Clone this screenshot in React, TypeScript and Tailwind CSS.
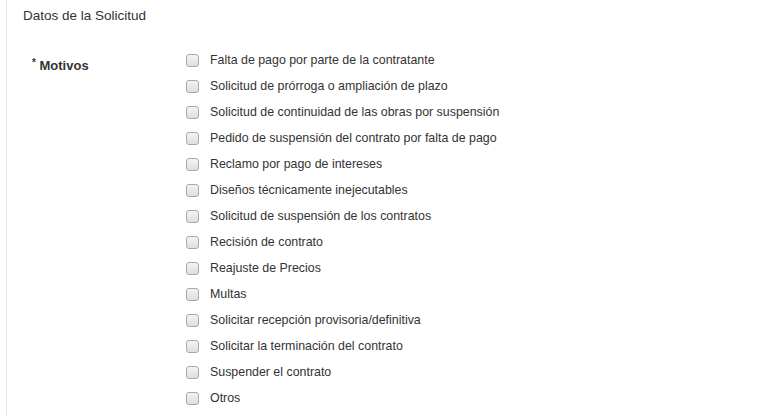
const motivos = [
  "Falta de pago por parte de la contratante",
  "Solicitud de prórroga o ampliación de plazo",
  "Solicitud de continuidad de las obras por suspensión",
  "Pedido de suspensión del contrato por falta de pago",
  "Reclamo por pago de intereses",
  "Diseños técnicamente inejecutables",
  "Solicitud de suspensión de los contratos",
  "Recisión de contrato",
  "Reajuste de Precios",
  "Multas",
  "Solicitar recepción provisoria/definitiva",
  "Solicitar la terminación del contrato",
  "Suspender el contrato",
  "Otros",
];

const Checkbox = () => (
  <span className="h-[13px] w-[13px] shrink-0 rounded-[3px] border border-[#a9a9a9] bg-gradient-to-b from-[#f4f4f4] to-[#dedede]" />
);

export default function App() {
  return (
    <div className="h-[416px] w-[766px] overflow-hidden bg-white font-['Liberation_Sans',Arial,sans-serif] text-[13px] text-[#333]">
      <div className="ml-[6px] h-full border-l border-[#e4e4e4] pl-4">
        <h2 className="pt-[7px] text-[13.5px] leading-[18px] font-normal">Datos de la Solicitud</h2>
        <div className="mt-[22px] flex">
          <div className="w-[163px] pt-[10px] pl-[9px] font-bold leading-[18px]">
            <span className="relative -top-[4px] text-[10px]">*</span> Motivos
          </div>
          <ul className="flex flex-col text-[12.4px]">
            {motivos.map((m) => (
              <li key={m} className="flex h-[26px] items-center gap-[11px]">
                <Checkbox />
                <span>{m}</span>
              </li>
            ))}
          </ul>
        </div>
      </div>
    </div>
  );
}
